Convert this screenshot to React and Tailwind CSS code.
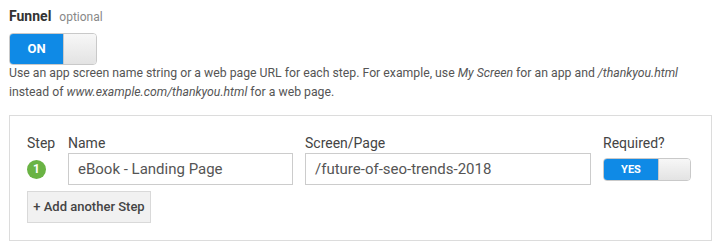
import React from 'react';

function Toggle({ label, size }) {
  const big = size === 'lg';
  return (
    <div className={`flex rounded-[4px] overflow-hidden border border-[#c9c9c9] ${big ? 'w-[88px] h-[32px]' : 'w-[88px] h-[23px]'}`}>
      <div className={`flex items-center justify-center bg-[#0f8ae6] text-white font-bold ${big ? 'w-[53px] text-[13px]' : 'w-[54px] text-[11px]'}`}>
        {label}
      </div>
      <div className="flex-1 bg-gradient-to-b from-[#f7f7f7] to-[#e3e3e3] border-l border-[#c9c9c9]" />
    </div>
  );
}

export default function App() {
  return (
    <div className="w-[726px] h-[252px] bg-white px-[9px] pt-[6px] text-[#555]" style={{ fontFamily: 'Roboto, "Open Sans", sans-serif' }}>
      <div className="flex items-baseline gap-[8px]">
        <span className="text-[14px] font-bold text-[#333]">Funnel</span>
        <span className="text-[12px] text-[#888]">optional</span>
      </div>
      <div className="mt-[6px]">
        <Toggle label="ON" size="lg" />
      </div>
      <p className="text-[12.25px] leading-[19px] text-[#555] mt-[-1px] whitespace-nowrap">
        Use an app screen name string or a web page URL for each step. For example, use <i>My Screen</i> for an app and <i>/thankyou.html</i>
        <br />
        instead of <i>www.example.com/thankyou.html</i> for a web page.
      </p>
      <div className="mt-[13px] w-[703px] h-[126px] border border-[#dcdcdc] px-[17px] pt-[19px]">
        <div className="flex gap-[12px] text-[14px] leading-[17px] text-[#444]">
          <div className="w-[30px]">
            <div>Step</div>
            <div className="h-[32px] mt-[1px] flex items-center">
              <span className="w-[19px] h-[19px] rounded-full bg-[#6ab344] text-white text-[12px] font-bold flex items-center justify-center">1</span>
            </div>
          </div>
          <div className="w-[225px] ml-[-1px]">
            <div>Name</div>
            <div className="h-[32px] mt-[1px] border border-[#ccc] flex items-center px-[9px] text-[15px] text-[#555]">eBook - Landing Page</div>
          </div>
          <div className="w-[286px]">
            <div>Screen/Page</div>
            <div className="h-[32px] mt-[1px] border border-[#ccc] flex items-center px-[9px] text-[15px] text-[#555]">/future-of-seo-trends-2018</div>
          </div>
          <div>
            <div>Required?</div>
            <div className="h-[32px] mt-[1px] flex items-center">
              <Toggle label="YES" size="sm" />
            </div>
          </div>
        </div>
        <button className="mt-[6px] h-[32px] w-[124px] border border-[#d9d9d9] bg-[#f1f1f1] text-[13px] font-medium text-[#444]">
          + Add another Step
        </button>
      </div>
    </div>
  );
}
